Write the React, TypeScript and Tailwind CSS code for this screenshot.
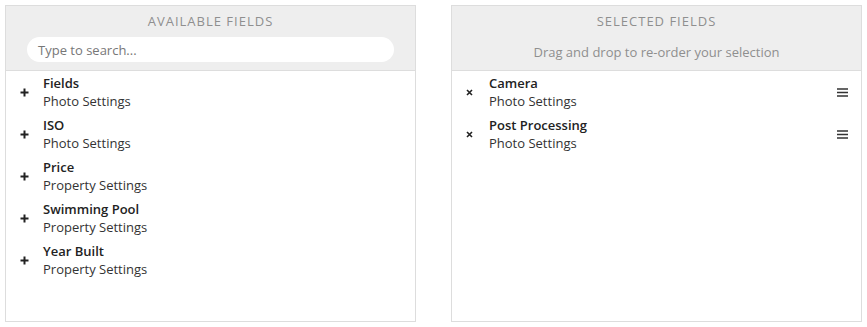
import React from "react";

const available = [
  { t: "Fields", s: "Photo Settings" },
  { t: "ISO", s: "Photo Settings" },
  { t: "Price", s: "Property Settings" },
  { t: "Swimming Pool", s: "Property Settings" },
  { t: "Year Built", s: "Property Settings" },
];

const selected = [
  { t: "Camera", s: "Photo Settings" },
  { t: "Post Processing", s: "Photo Settings" },
];

function Plus() {
  return (
    <svg width="9" height="9" viewBox="0 0 9 9" className="shrink-0">
      <path d="M4.5 0.5v8M0.5 4.5h8" stroke="#222" strokeWidth="2" />
    </svg>
  );
}

function Times() {
  return (
    <svg width="7" height="7" viewBox="0 0 7 7" className="shrink-0">
      <path d="M1 1l5 5M6 1l-5 5" stroke="#222" strokeWidth="1.6" />
    </svg>
  );
}

function Bars() {
  return (
    <svg width="11" height="9" viewBox="0 0 11 9" className="shrink-0">
      <path d="M0 1h11M0 4.5h11M0 8h11" stroke="#333" strokeWidth="1.4" />
    </svg>
  );
}

export default function App() {
  return (
    <div
      className="w-[867px] h-[327px] bg-white flex gap-[35px] pl-[5px] pt-[5px] text-[13px] text-[#333]"
      style={{ fontFamily: '"Open Sans", sans-serif' }}
    >
      <div className="w-[411px] h-[317px] border border-[#ddd] flex flex-col">
        <div className="h-[65px] bg-[#eee] border-b border-[#ddd] flex flex-col items-center">
          <div className="mt-[6px] leading-[18px] tracking-[1px] text-[#8f8f8f] uppercase">
            Available Fields
          </div>
          <div className="mt-[7px] self-stretch mx-[21px] h-[25px] rounded-full bg-white flex items-center pl-[11px] text-[#777] leading-[18px]">
            Type to search...
          </div>
        </div>
        <div className="flex flex-col">
          {available.map((f) => (
            <div key={f.t} className="flex items-center h-[42px] pl-[14px]">
              <Plus />
              <div className="ml-[14px] flex flex-col leading-[18px]">
                <span className="font-semibold text-[#222]">{f.t}</span>
                <span>{f.s}</span>
              </div>
            </div>
          ))}
        </div>
      </div>
      <div className="w-[411px] h-[317px] border border-[#ddd] flex flex-col">
        <div className="h-[65px] bg-[#eee] border-b border-[#ddd] flex flex-col items-center">
          <div className="mt-[6px] leading-[18px] tracking-[1px] text-[#8f8f8f] uppercase">
            Selected Fields
          </div>
          <div className="mt-[13px] leading-[18px] text-[#8f8f8f]">
            Drag and drop to re-order your selection
          </div>
        </div>
        <div className="flex flex-col">
          {selected.map((f) => (
            <div key={f.t} className="flex items-center h-[42px] pl-[14px] pr-[13px]">
              <Times />
              <div className="ml-[16px] flex flex-col leading-[18px] flex-1">
                <span className="font-semibold text-[#222]">{f.t}</span>
                <span>{f.s}</span>
              </div>
              <Bars />
            </div>
          ))}
        </div>
      </div>
    </div>
  );
}
